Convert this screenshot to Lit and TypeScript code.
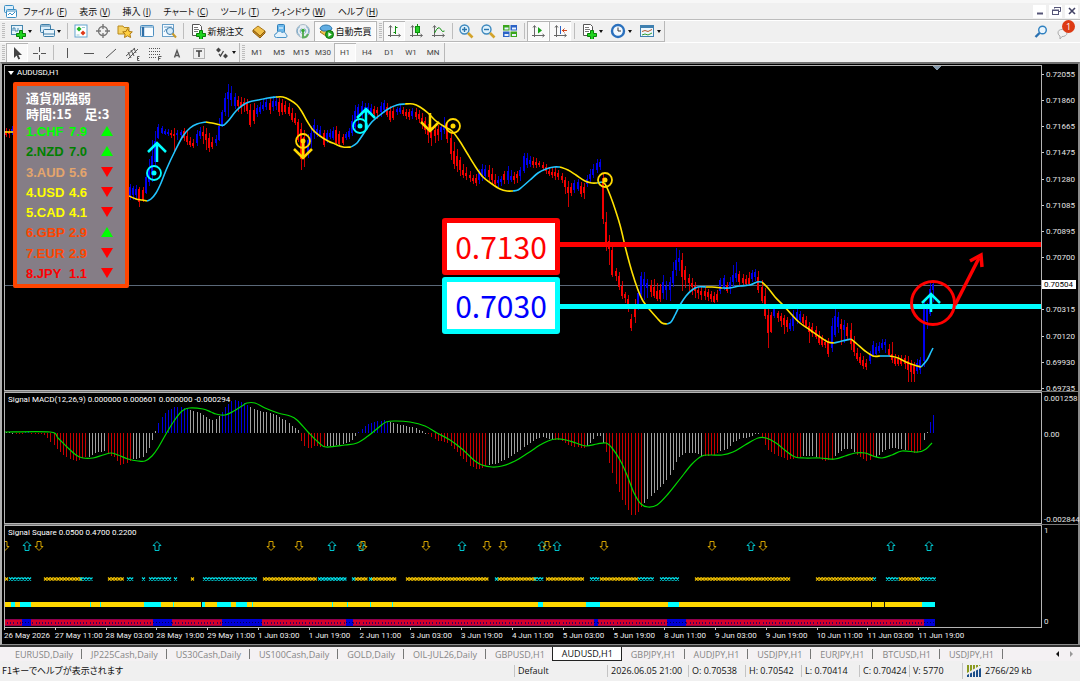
import { LitElement, html, svg, css, nothing } from "lit";
import { customElement } from "lit/decorators.js";
import { classMap } from "lit/directives/class-map.js";

const STEP = 3.175;
const FIRST = 6;

/* Price bars: x, high, body top, body bottom, low, colour */
const BARS = `6 128 131 135 137 r;9 129 132 134 138 r;12 126 129 133 135 b
130 184 187 197 200 b;133 186 188 195 200 b;137 185 189 195 199 b;139 187 188 202 207 r;142 190 193 201 203 r;145 175 178 196 197 b;148 166 172 183 186 b;151 143 160 178 186 b;155 132 143 165 170 b;157 124 127 142 144 b;160 125 127 133 134 b;165 129 131 134 135 b;171 130 133 135 138 r;174 128 134 136 153 r;177 130 133 135 140 b;180 130 132 134 138 b;184 128 131 138 141 r;187 130 136 142 145 r;190 137 141 145 147 r;193 140 144 146 148 r;196 130 134 144 147 b;200 127 131 135 138 b;205 126 133 137 149 r;209 133 138 148 152 r;213 138 143 147 149 r;217 134 137 141 144 b;219 116 124 140 141 b;222 110 112 125 126 b;225 93 98 112 116 b;228 84 92 99 119 b;230 82 91 97 105 b;234 92 97 106 108 b;238 96 100 106 112 r;243 98 103 107 115 r;246 97 100 105 108 r;250 104 110 125 127 r;253 103 110 122 125 r;257 105 108 114 117 b;262 100 106 110 112 b;266 98 102 107 110 b;270 98 103 110 115 r;275 95 100 104 108 b;278 97 102 112 116 r;284 100 104 112 114 r;288 102 106 113 115 r;292 108 113 120 122 r;297 117 121 125 127 r;300 122 125 165 169 r;303 125 135 150 172 r;306 135 140 158 162 r;309 133 140 150 155 b;313 117 124 132 140 b;316 124 128 135 138 b;320 126 130 134 136 b;324 131 133 147 148 r;328 130 133 137 140 b;332 127 132 136 138 b;336 126 130 143 145 r;342 134 137 144 146 r;346 132 134 138 140 b;350 126 130 136 138 b
354 105 113 130 135 b;357 105 108 122 130 b;361 101 106 112 118 b;365 103 107 113 116 b;370 103 107 111 114 b;374 106 109 114 118 r;378 107 110 113 119 r;382 100 104 112 116 b;385 100 103 109 111 b;389 105 111 120 122 r;392 107 112 121 122 r;396 107 109 112 115 b;400 105 108 112 114 b;404 108 111 115 117 r;408 109 112 117 120 r;412 108 111 116 119 b;417 108 112 117 120 r;421 112 117 122 127 r;425 117 121 130 134 r;430 127 132 138 148 r;436 125 130 136 141 r;441 124 127 132 140 b;445 115 124 130 133 b;449 125 130 145 150 r;452 139 145 163 170 r;455 145 155 165 169 r;459 154 157 168 175 r;463 164 170 175 178 r;467 168 173 176 180 r;473 175 178 181 184 r;477 174 178 184 187 r;481 164 169 177 182 b;486 165 169 176 178 b;490 165 171 178 183 r;495 174 180 184 186 r;500 177 180 183 187 b;503 174 177 180 184 r;507 165 170 180 184 b;511 170 176 180 182 b;515 173 176 180 184 r;520 169 172 176 182 b;523 153 156 172 174 b;526 152 158 165 168 b;531 157 160 164 167 b;534 157 161 165 168 r;540 161 163 165 167 r;545 163 166 170 173 r;550 168 172 175 177 r;555 167 172 176 180 r;560 171 174 177 180 r;564 176 178 185 188 r;567 181 187 193 211 r;571 183 187 193 196 r;574 180 183 190 193 b;577 178 181 188 190 b;581 182 186 194 198 r;584 183 187 193 199 r;588 172 176 181 183 b;592 166 172 178 181 b;596 159 163 170 173 b;600 159 162 167 170 b;602 160 162 210 215 r;605 203 215 241 246 r;609 235 240 247 264 r;612 240 247 275 276 r
615 268 271 274 280 r;618 270 273 284 287 r;621 278 284 295 298 r;625 292 294 298 303 r;628 293 297 307 310 r;631 317 321 330 332 r;634 300 308 318 325 r;637 294 300 312 314 b;640 274 275 298 300 b;643 269 278 285 300 b;648 281 284 288 298 b;652 279 285 294 297 r;656 280 290 298 300 r;659 290 295 302 304 r;662 272 280 294 298 b;666 281 286 290 300 b;669 280 284 291 303 b;672 266 274 286 290 b;675 248 260 272 278 b;679 250 258 262 270 b;682 252 259 277 291 r;686 268 272 280 288 r;690 277 281 285 292 r;694 280 285 290 298 r;698 287 290 293 299 r;704 287 291 296 300 r;709 290 293 298 302 r;714 292 296 302 303 r;718 290 294 300 302 r;721 275 276 289 292 b;724 275 278 288 290 b;728 285 288 292 295 r;731 273 279 288 294 b;735 258 272 276 280 b;739 270 274 282 286 r;744 276 279 284 286 r;748 273 280 285 287 r;752 270 273 279 282 b;755 269 272 276 280 b;758 270 276 288 292 r;761 278 285 298 300 r;765 288 297 317 320 r;768 305 315 333 348 r;771 312 315 333 334 r;774 305 308 316 318 b;778 312 314 318 322 r;780 312 316 320 325 r;784 315 318 325 334 r;788 317 321 328 331 r;791 320 324 330 331 b;794 308 311 325 331 b;798 310 313 318 320 b;802 313 316 322 325 r;806 316 320 326 328 r;809 322 326 332 343 r;814 324 328 333 335 r;818 330 334 342 344 r;822 335 338 345 347 r;825 339 342 345 348 r;828 340 344 354 357 r;831 320 328 350 354 b;834 308 316 338 340 b;837 309 314 326 328 b;840 318 323 328 346 r;844 320 325 330 343 b;848 323 327 337 340 r;851 323 330 345 352 r;855 342 347 356 358 r;858 352 356 360 362 r;862 354 358 365 368 r;866 360 364 368 371 r;869 354 358 363 366 b;872 340 344 355 357 b;877 344 348 354 355 b;882 339 343 348 350 b;885 338 341 344 352 b;889 345 350 356 358 r;892 342 354 360 363 r;895 354 358 364 366 r;899 355 359 364 366 r;904 355 358 363 366 r;907 355 360 370 382 r;911 360 364 372 382 r;914 362 366 374 382 r;918 358 362 370 372 b;921 357 360 370 375 b;923 301 303 370 375 b;926 308 314 322 332 b;930 280 289 314 316 b;933 283 284 290 302 b`;

/* Moving average, one colour per run */
const AVERAGE: [string, string][] = [
  ["y", "5 132,13 132"],
  ["y", "129 196,136 199,142 200,147 201"],
  ["c", "147 201,151 199,156 193,161 183,167 168,175 151,183 136,190 128,197 124,206 122"],
  ["y", "206 122,212 123,220 125"],
  ["c", "220 125,224 125,229 120,236 111,243 105,249 102,258 100,268 98,276 97"],
  ["y", "276 97,283 97,290 100,297 105,302 112,307 121,313 130,320 136,328 141,335 144,343 147,351 147"],
  ["c", "351 147,357 143,364 133,371 123,380 115,388 109,397 105,405 104"],
  ["y", "405 104,413 104,420 107,428 113,436 121,445 127,452 131,459 140,467 153,475 166,483 177,492 184,500 189,507 191,513 191"],
  ["c", "513 191,518 190,522 187,530 180,538 173,546 169,554 167,560 167"],
  ["y", "560 167,568 170,576 175,585 181,592 183,597 183"],
  ["c", "597 183,602 182"],
  ["y", "602 182,605 184,608 190,613 203,620 225,626 250,632 272,638 290,643 301,650 310,657 318,662 323,667 324"],
  ["c", "667 324,671 322,675 315,680 305,686 296,692 290,698 287,706 287"],
  ["y", "706 287,712 287,722 288"],
  ["c", "722 288,729 288,740 286,750 285,757 282,762 282"],
  ["y", "762 282,768 288,775 297,783 305,792 315,800 323,810 330,820 337,828 342,834 343"],
  ["c", "834 343,842 341,851 339"],
  ["y", "851 339,857 344,865 351,873 356,880 356"],
  ["c", "880 356,890 356"],
  ["y", "890 356,898 358,906 362,914 365,921 367"],
  ["c", "921 367,927 360,931 352,933 348"],
];

/* Histogram: x, end of bar, colour */
const MACD_BARS = `8 432 g;20 434 r;28 431 b;34 434 r;40 434 r;44 435 r;50 441 r;56 448 r;62 454 r;68 458 r;76 461 r;85 457 r;88 457 g;95 453 g;105 451 g;109 455 r;115 458 r;120 465 r;125 464 r;132 459 r;134 459 g;142 458 g;148 450 g;152 440 g;154 434 g;157 426 b;162 416 b;168 410 b;175 407 b;182 407 b;187 409 b;190 410 g;200 413 g;210 419 g;214 421 g;218 417 g;221 414 b;224 408 b;228 404 b;233 400 b;240 402 b;246 404 b;249 406 g;256 410 g;265 412 g;275 415 g;285 420 g;291 425 g;298 430 g;300 438 r;304 446 r;309 449 r;314 446 r;325 447 r;328 446 g;340 445 g;350 442 g;355 436 g;360 430 b;366 425 b;374 422 b;384 420 b;388 423 b;390 422 g;400 425 g;412 427 g;420 430 g;424 432 g;428 434 r;437 441 r;446 442 r;455 450 r;462 458 r;470 466 r;478 470 r;486 466 r;488 465 g;495 464 g;502 461 g;510 457 g;520 450 g;528 444 g;536 439 g;542 437 g;552 440 g;556 440 r;562 441 r;568 445 r;576 447 r;584 448 r;588 446 g;594 438 g;599 434 g;602 441 g;606 452 r;610 465 r;616 485 r;622 500 r;628 510 r;632 516 r;636 515 r;640 508 r;643 505 g;650 496 g;657 490 g;665 482 g;672 472 g;676 462 g;680 456 g;686 453 g;695 453 g;702 456 g;706 456 r;714 455 r;718 453 r;721 450 g;727 449 g;732 443 g;740 439 g;750 437 g;756 434 g;759 434 g;762 437 r;766 448 r;772 453 r;780 457 r;788 460 r;796 458 r;801 457 r;804 456 g;814 456 g;818 458 r;824 461 r;832 460 r;835 455 g;842 450 g;850 448 g;854 452 g;857 455 r;862 458 r;868 462 r;874 456 r;877 457 g;885 450 g;893 448 g;905 450 g;907 450 r;914 453 r;920 451 r;923 442 g;926 434 g;929 425 b;932 415 b`;

const MACD_LINE =
  "5 432,50 432,58 438,67 447,76 455,83 458,93 458,103 455,111 453,118 455,128 459,138 461,145 461,152 456,158 448,166 434,174 421,182 411,189 408,203 409,211 412,216 414,225 415,234 411,242 406,247 403,255 403,265 408,278 413,290 416,297 420,308 432,318 442,326 447,345 445,357 443,368 436,378 428,386 422,396 421,410 422,425 426,437 433,450 440,462 449,475 461,482 465,492 467,502 466,515 461,528 453,540 445,548 441,556 439,566 440,576 443,586 446,597 444,606 443,612 448,620 460,627 475,634 493,641 504,648 507,657 505,668 494,680 479,692 464,702 456,710 455,722 455,733 452,745 445,758 438,766 438,776 443,786 451,795 457,805 458,820 458,835 459,845 456,855 453,865 453,873 456,882 458,892 455,902 451,918 452,926 449,932 443";

const UP_MARKS = [27, 157, 332, 361, 462, 542, 557, 751, 891, 929];
const DOWN_MARKS = [5, 39, 271, 299, 363, 426, 487, 503, 547, 604, 712, 763];
const GOLD_RUNS = [[5, 9], [44, 80], [108, 124], [191, 194], [263, 317], [355, 368], [371, 396], [406, 489], [498, 534], [546, 584], [600, 638], [695, 791], [816, 873], [899, 920]];
const CYAN_RUNS = [[9, 31], [80, 92], [127, 133], [142, 146], [149, 171], [174, 177], [203, 257], [318, 346], [352, 355], [369, 371], [495, 498], [534, 543], [590, 600], [638, 654], [660, 680], [873, 877], [886, 898], [920, 934]];
const BAND_CYAN = [[11, 15], [20, 31], [90, 91], [100, 101], [144, 161], [173, 174], [202, 205], [217, 231], [236, 247], [252, 253], [332, 333], [347, 348], [370, 371], [392, 393], [538, 543], [586, 600], [668, 679], [922, 935]];
const BAND_GAPS = [201, 871, 884];
const BLUE_RUNS = [[22, 31], [153, 172], [222, 262], [346, 353], [594, 598], [667, 686], [924, 935]];

const TIMES = ["26 May 2026", "27 May 11:00", "28 May 03:00", "28 May 19:00", "29 May 11:00", "1 Jun 03:00", "1 Jun 19:00", "2 Jun 11:00", "3 Jun 03:00", "3 Jun 19:00", "4 Jun 11:00", "5 Jun 03:00", "5 Jun 19:00", "8 Jun 11:00", "9 Jun 03:00", "9 Jun 19:00", "10 Jun 11:00", "11 Jun 03:00", "11 Jun 19:00"];
const PRICES = ["0.72055", "0.71860", "0.71665", "0.71475", "0.71280", "0.71085", "0.70895", "0.70700", "", "0.70315", "0.70120", "0.69930", "0.69735"];

const curve = (points: string) => {
  const p = points.split(",").map((s) => s.split(" ").map(Number));
  let d = `M${p[0][0]} ${p[0][1]}`;
  for (let i = 0; i < p.length - 1; i++) {
    const a = p[i - 1] ?? p[i];
    const b = p[i];
    const c = p[i + 1];
    const e = p[i + 2] ?? c;
    d += `C${b[0] + (c[0] - a[0]) / 6} ${b[1] + (c[1] - a[1]) / 6} ${c[0] - (e[0] - b[0]) / 6} ${c[1] - (e[1] - b[1]) / 6} ${c[0]} ${c[1]}`;
  }
  return d;
};

const parse = (text: string) =>
  text.split(/[;\n]/).map((row) => {
    const f = row.trim().split(" ");
    return { v: f.slice(0, -1).map(Number), c: f[f.length - 1] };
  });

/* Fill every bar slot from the nearest entries on each side */
const fill = (text: string) => {
  const rows = parse(text);
  const out: { v: number[]; c: string }[] = [];
  for (let i = 0; FIRST + i * STEP < 935; i++) {
    const x = FIRST + i * STEP;
    let k = 0;
    while (k < rows.length - 2 && rows[k + 1].v[0] <= x) k++;
    const a = rows[k];
    const b = rows[k + 1];
    const t = Math.min(1, Math.max(0, (x - a.v[0]) / (b.v[0] - a.v[0])));
    if (b.v[0] - a.v[0] > 60 && t > 0.02 && t < 0.98) continue;
    const near = t < 0.5 ? a : b;
    out.push({ v: [Math.round(x), ...a.v.slice(1).map((n, j) => Math.round(n + (b.v[j + 1] - n) * t))], c: near.c });
  }
  return out;
};

@customElement("tool-icon")
class ToolIcon extends LitElement {
  static properties = { name: {} };
  declare name: string;

  static styles = css`
    :host { display: inline-flex; flex: none; }
    svg { display: block; width: 16px; height: 16px; }
  `;

  glyph() {
    const axes = svg`<path d="M4.5 3v11M2 12.500h12M3 4.500l1.500-2 1.500 2M12.500 11l2 1.500-2 1.500" fill="none" stroke="#666"/>`;
    const plus = svg`<path d="M9.500 7.500h3v3h3v3h-3v3h-3v-3h-3v-3h3z" fill="#1fd31f" stroke="#078007"/>`;
    const page = svg`<path d="M2.500 1.500h7l2 2v9h-9z" fill="#fff" stroke="#555"/><path d="M4 4.500h4M4 6.500h5M4 8.500h4" stroke="#777"/>`;
    switch (this.name) {
      case "app": return svg`<rect x="2.500" y="2.500" width="9" height="7" rx="1" fill="#dff0fb" stroke="#3b8fc4"/><rect x="4.500" y="6.500" width="10" height="8" rx="1" fill="#fff" stroke="#3b8fc4"/><path d="M5 8h9M6 12l2-2 2 2 3-3" fill="none" stroke="#3b8fc4"/>`;
      case "newchart": return svg`<rect x="1.500" y="2.500" width="11" height="9" fill="#e6f3fb" stroke="#4686ad"/><path d="M3 8V5h2v3h3V5" fill="none" stroke="#4686ad"/>${plus}`;
      case "profiles": return svg`<rect x="1.500" y="1.500" width="10" height="8" rx="1" fill="#dceefa" stroke="#3f7ea8"/><rect x="4.500" y="6.500" width="11" height="7" rx="1" fill="#eaf5fc" stroke="#3f7ea8"/><path d="M2 3h9M5 11h10" stroke="#3f7ea8"/>`;
      case "market": return svg`<rect x="2" y="2" width="12" height="12" fill="#fff" stroke="#63a4cf"/><path d="M6 3.500l2.500 2.500L6 8.500 3.500 6z" fill="#1db41d"/><path d="M10 7.500l2.500 2.500-2.500 2.500L7.500 10z" fill="#e03818"/><path d="M9 4.500h3M3.500 12h3" stroke="#9cc"/>`;
      case "target": return svg`<circle cx="8" cy="8" r="4.500" fill="none" stroke="#777" stroke-width="1.400"/><path d="M8 1v5M8 10v5M1 8h5M10 8h5" stroke="#777" stroke-width="1.400"/>`;
      case "navigator": return svg`<path d="M1 3h5l1 1.500h5V11H1z" fill="#f6d365" stroke="#b98a1c"/><path d="M10.500 5.500l1.500 3 3.300.4-2.400 2.200.7 3.400-3.100-1.700-3 1.700.6-3.400-2.400-2.200 3.300-.4z" fill="#ffcf40" stroke="#b07a10"/>`;
      case "terminal": return svg`<rect x="1.500" y="2.500" width="13" height="11" rx="1" fill="#f8fcff" stroke="#4d8fc0"/><path d="M2 4h12" stroke="#4d8fc0"/><path d="M4 4v9" stroke="#2e6ea6" stroke-width="2.400"/>`;
      case "tester": return svg`<rect x="1.500" y="1.500" width="11" height="12" fill="#f4faff" stroke="#6aa0c8"/><path d="M3 4h8M3 9l2-3 2 3" fill="none" stroke="#6aa0c8"/><circle cx="9" cy="8" r="3.500" fill="#d5ecfb" stroke="#3a78a8"/><path d="M11.500 10.500l3.500 4" stroke="#c79a2c" stroke-width="2"/>`;
      case "order": return svg`${page}${plus}`;
      case "book": return svg`<path d="M2 7l5-4 7 5-5 5z" fill="#f1c14b" stroke="#a8761a"/><path d="M2 7v2l7 6 5-5V8l-5 5z" fill="#c98b22" stroke="#8f6010"/>`;
      case "cloud": return svg`<rect x="4.500" y="1.500" width="7" height="8" rx="1" fill="#6db9ec" stroke="#2f7fb8"/><path d="M6 5h4" stroke="#fff"/><path d="M3.500 14.500a2 2 0 0 1 0-4 3 3 0 0 1 5.500-1 2.600 2.600 0 0 1 4 2 1.600 1.600 0 0 1 0 3z" fill="#e4f2fb" stroke="#4a94c9"/>`;
      case "signal": return svg`<circle cx="8" cy="8" r="6.500" fill="#e8eef2" stroke="#a9bac6"/><path d="M5 3.500a5 5 0 0 0 0 9M11 3.500a5 5 0 0 1 0 9M6.500 5.500a3 3 0 0 0 0 5M9.500 5.500a3 3 0 0 1 0 5" fill="none" stroke="#7aa9c9"/><path d="M8 8v6.500q4 0 5-3.500" fill="none" stroke="#5cae5c" stroke-width="2"/><circle cx="8" cy="7.500" r="1.800" fill="#37a637"/>`;
      case "auto": return svg`<path d="M2 9l6-6 6 6-6 4z" fill="#f0c24c" stroke="#a9791b"/><path d="M2 6a6 4 0 0 1 12 0l-3 2H5z" fill="#62aee3" stroke="#2b76ab"/><circle cx="11.500" cy="11.500" r="4" fill="#23a923" stroke="#0d6e0d"/><path d="M10.300 9.300l3.500 2.200-3.500 2.200z" fill="#fff"/>`;
      case "bars": return svg`${axes}<path d="M9.500 3v8M7.500 9.500h2M9.500 4.500h2" stroke="#0c8f0c" fill="none"/>`;
      case "candles": return svg`${axes}<path d="M9.500 1v11" stroke="#0c8f0c"/><rect x="7.500" y="3.500" width="4" height="6" fill="#27cf27" stroke="#0c8f0c"/>`;
      case "linechart": return svg`${axes}<path d="M4.500 10q4-8 6-4t4 2" fill="none" stroke="#0c8f0c"/>`;
      case "zoomin": return svg`<circle cx="6.500" cy="6.500" r="4.500" fill="#dff2fd" stroke="#3d88bd" stroke-width="1.400"/><path d="M4 6.500h5M6.500 4v5" stroke="#2b76ab" stroke-width="1.400"/><path d="M10 10l4.500 4.500" stroke="#d3a32b" stroke-width="2.600"/>`;
      case "zoomout": return svg`<circle cx="6.500" cy="6.500" r="4.500" fill="#dff2fd" stroke="#3d88bd" stroke-width="1.400"/><path d="M4 6.500h5" stroke="#2b76ab" stroke-width="1.400"/><path d="M10 10l4.500 4.500" stroke="#d3a32b" stroke-width="2.600"/>`;
      case "tile": return svg`<rect x="1" y="2" width="6.500" height="5.500" fill="#3aa61c"/><rect x="8.500" y="2" width="6.500" height="5.500" fill="#2b63c6"/><rect x="1" y="8.500" width="6.500" height="5.500" fill="#2b63c6"/><rect x="8.500" y="8.500" width="6.500" height="5.500" fill="#3aa61c"/><path d="M2.500 4.500h4v2h-4zM10 4.500h4v2h-4zM2.500 11h4v2h-4zM10 11h4v2h-4z" fill="#e8f2ff"/>`;
      case "scroll": return svg`${axes}<path d="M8 4l4 3.500-4 3z" fill="#17a317"/>`;
      case "shift": return svg`${axes}<path d="M8.500 3v8" stroke="#2b63c6"/><path d="M10 7.500h5M12.500 5.500l-2 2 2 2" stroke="#d2451c" fill="none"/>`;
      case "indicators": return svg`${page}${plus}`;
      case "clock": return svg`<circle cx="8" cy="8" r="6" fill="#f3f9ff" stroke="#2a70bd" stroke-width="2.400"/><path d="M8 4.500V8h3" fill="none" stroke="#333"/>`;
      case "template": return svg`<rect x="1.500" y="2.500" width="13" height="11" fill="#eef7fd" stroke="#3f80b0"/><path d="M2 4h12" stroke="#3f80b0" stroke-width="2"/><path d="M3 8.500l3-1 3 1 4-2" fill="none" stroke="#b5562a"/><path d="M3 12l3-1 3 1 4-2" fill="none" stroke="#2f9a2f"/>`;
      case "cursor": return svg`<path d="M5 2v11l2.600-2.400 1.800 4 1.800-.8-1.800-3.900H13z" fill="#444"/>`;
      case "cross": return svg`<path d="M8.500 2v5M8.500 10v5M2 8.500h5M10 8.500h5" stroke="#555"/>`;
      case "vline": return svg`<path d="M8.500 3v10" stroke="#555"/>`;
      case "hline": return svg`<path d="M3 8.500h10" stroke="#555"/>`;
      case "trend": return svg`<path d="M3 13L13 4" stroke="#555"/>`;
      case "channel": return svg`<path d="M1 11L10 3M3 14L13 4M3 7l3 6M6 5l3 6M9 3l2 5" stroke="#555"/><path d="M14.500 11.500h-2v4h2M12.500 13.500h1.500" fill="none" stroke="#555"/>`;
      case "fibo": return svg`<path d="M2 3.500h11M2 6.500h11M2 9.500h11M2 12.500h7" stroke="#555" stroke-dasharray="1 1"/><path d="M14.500 11.500h-3v4M11.500 13.500h2" fill="none" stroke="#555"/>`;
      case "text": return svg`<path d="M5.500 12.500L8 5.500 10.500 12.500M6.500 10.500h3" fill="none" stroke="#555" stroke-width="1.400"/>`;
      case "label": return svg`<rect x="2.500" y="3.500" width="11" height="10" fill="none" stroke="#777" stroke-dasharray="1 1"/><path d="M5 6h6M8 6v6" stroke="#444" stroke-width="1.600"/>`;
      case "arrows": return svg`<path d="M2 5l2.500-2.500L7 5 4.500 7.500zM9 11l2.500-2.500L14 11l-2.500 2.500z" fill="#444"/><path d="M5 9l1.500 2 3-5" fill="none" stroke="#444" stroke-width="1.300"/>`;
      case "search": return svg`<circle cx="9.500" cy="6" r="3.800" fill="#eaf5fd" stroke="#2f80c0" stroke-width="1.400"/><path d="M6.500 9L2.500 13" stroke="#2a70b0" stroke-width="2.400"/>`;
      case "chat": return svg`<path d="M2 9a4.500 3.600 0 0 1 9 0 4.500 3.600 0 0 1-5 3.500L4 15v-3A3.600 3.600 0 0 1 2 9z" fill="#f2f2f2" stroke="#aaa"/>`;
      case "min": return svg`<path d="M5 10.500h6" stroke="#557" stroke-width="2"/>`;
      case "restore": return svg`<path d="M6.500 5.500v-1h6v4h-2" fill="none" stroke="#557"/><rect x="4.500" y="7" width="6" height="4.500" fill="none" stroke="#557"/><path d="M6 4.500h7M4 7.500h7" stroke="#557"/>`;
      case "close": return svg`<path d="M5 5l6 6M11 5l-6 6" stroke="#446" stroke-width="1.600"/>`;
      case "net": return svg`<path d="M1 2h14L1 10z" fill="#8a9a1e"/><path d="M15 5v9H1v-2z" fill="#1c4f8a"/><path d="M3.500 1v13M6.500 1v13M9.500 1v13M12.500 1v13" stroke="#eee"/>`;
      default: return nothing;
    }
  }

  render() {
    return html`<svg viewBox="0 0 16 16" aria-hidden="true">${this.glyph()}</svg>`;
  }
}

@customElement("price-chart")
class PriceChart extends LitElement {
  static styles = css`
    :host { display: grid; grid-template-columns: 1fr 36px; position: relative; min-height: 0; }
    .plot { position: relative; border: 1px solid #b4b4b4; overflow: hidden; min-width: 0; }
    svg { position: absolute; inset: 0; width: 100%; height: 100%; shape-rendering: crispEdges; }
    .smooth { shape-rendering: auto; }
    .r { fill: #f40000; } .b { fill: #0000f0; }
    .avg { fill: none; stroke-width: 1.6; shape-rendering: auto; }
    .avg.y { stroke: #ffe100; } .avg.c { stroke: #22c4ff; }
    .symbol { position: absolute; left: 3px; top: 0; font-size: 8px; line-height: 13px; color: #fff; display: flex; align-items: center; gap: 3px; }
    .caret { border: 3px solid transparent; border-top: 4px solid #fff; border-bottom: 0; }
    .strength { position: absolute; left: 8px; top: 16px; width: 116px; height: 206px; box-sizing: border-box; border: 4px solid #ff4500; border-radius: 2px; background: #857d86; padding: 4px 12px 0 9px; display: flex; flex-direction: column; color: #fff; }
    .strength h2 { margin: 0; font: 700 13px/16px "Noto Sans CJK JP", sans-serif; white-space: pre; }
    table { flex: 1; border-collapse: collapse; width: 100%; font: bold 13px/20px "Liberation Sans", sans-serif; }
    td { padding: 0; } td:first-child { width: 43px; } td:last-child { text-align: right; }
    .tri { display: inline-block; border: 6px solid transparent; }
    .tri.up { border-bottom: 10px solid #00ff00; border-top: 0; }
    .tri.down { border-top: 10px solid #ff0000; border-bottom: 0; }
    .lime { color: #00ff00; } .green { color: #008000; } .sand { color: #e4a56c; } .yellow { color: #ffff00; } .orange { color: #ff4500; } .red { color: #ff0000; }
    .targets { position: absolute; left: 437px; top: 152px; display: grid; gap: 2px; }
    .target { border: 5px solid; border-radius: 3px; background: #fff; width: 108px; height: 47px; font: 30px/46px "Noto Sans CJK JP", sans-serif; text-align: center; }
    .target span { display: block; }
    .sell { border-color: #ff0000; } .sell span { color: #ff0000; }
    .buy { border-color: #00ffff; } .buy span { color: #0000ff; }
    .axis { display: flex; flex-direction: column; justify-content: space-between; padding: 5px 0 0; font-size: 8px; line-height: 9px; color: #e4e4e4; margin-bottom: -2px; }
    .axis span { display: flex; align-items: center; gap: 2px; height: 9px; white-space: nowrap; }
    .axis span::before { content: ""; width: 2px; height: 1px; background: #ccc; }
    .axis span:empty::before { background: none; }
    .now { position: absolute; right: 2px; top: 215px; background: #fff; color: #000; font-size: 8px; line-height: 9px; padding: 0 3px 0 2px; }
  `;

  up(x: number, y: number, len: number) {
    return svg`<path d="M${x} ${y + len}V${y}M${x - 9} ${y + 9}L${x} ${y}L${x + 9} ${y + 9}" fill="none" stroke="#00ffff" stroke-width="2.500"/>`;
  }

  down(x: number, y: number, len: number) {
    return svg`<path d="M${x} ${y - len}V${y}M${x - 9} ${y - 9}L${x} ${y}L${x + 9} ${y - 9}" fill="none" stroke="#ffd800" stroke-width="2.500"/>`;
  }

  ring(x: number, y: number, colour: string) {
    return svg`<circle cx=${x} cy=${y} r="7" fill="none" stroke=${colour} stroke-width="1.800"/><circle cx=${x} cy=${y} r="2.500" fill=${colour}/>`;
  }

  render() {
    const ranks: [string, string, string, boolean][] = [
      ["1.CHF", "7.9", "lime", true], ["2.NZD", "7.0", "green", true], ["3.AUD", "5.6", "sand", false], ["4.USD", "4.6", "yellow", false],
      ["5.CAD", "4.1", "yellow", false], ["6.GBP", "2.9", "orange", true], ["7.EUR", "2.9", "orange", false], ["8.JPY", "1.1", "red", false],
    ];
    return html`
      <div class="plot">
        <svg aria-hidden="true">
          <line x1="0" x2="100%" y1="219.500" y2="219.500" stroke="#5a6878" />
          <g transform="translate(-5 -66)">
            ${fill(BARS).map(({ v, c }) => svg`<rect class=${c} x=${v[0]} y=${v[1]} width="1" height=${v[4] - v[1]} opacity=".85"/><rect class=${c} x=${v[0] - 1} y=${v[2]} width="2" height=${Math.max(1, v[3] - v[2])}/>`)}
            ${AVERAGE.map(([c, pts]) => svg`<path class="avg ${c}" d=${curve(pts)}/>`)}
            <path d="M932 66h9l-4 5z" fill="#8296a8" />
          </g>
          <g class="smooth">
            <line x1="554" x2="100%" y1="178.500" y2="178.500" stroke="#ff0000" stroke-width="5" />
            <line x1="554" x2="100%" y1="240.500" y2="240.500" stroke="#00ffff" stroke-width="5" />
          </g>
          <g class="smooth" transform="translate(-5 -66)">
            ${this.up(157, 143, 19)} ${this.ring(154, 173, "#00ffff")}
            ${this.up(366, 109, 21)} ${this.ring(360, 126, "#00ffff")}
            ${this.ring(303, 141, "#ffd800")} ${this.down(303, 158, 16)}
            ${this.down(430, 131, 18)} ${this.ring(453, 126, "#ffd800")} ${this.ring(605, 180, "#ffd800")}
            ${this.up(931, 294, 18)}
            <circle cx="933" cy="303" r="21.500" fill="none" stroke="#ff0000" stroke-width="3" />
            <path d="M955 305L979 258" stroke="#ff0000" stroke-width="3.500" />
            <path d="M970 261L981 255L982 267" fill="none" stroke="#ff0000" stroke-width="3.500" />
          </g>
        </svg>
        <div class="symbol"><i class="caret"></i>AUDUSD,H1</div>
        <section class="strength">
          <h2>通貨別強弱</h2>
          <h2>時間:15　足:3</h2>
          <table>
            ${ranks.map(([n, v, c, rise]) => html`<tr class=${c}><td>${n}</td><td>${v}</td><td><i class="tri ${rise ? "up" : "down"}"></i></td></tr>`)}
          </table>
        </section>
        <div class="targets">
          <div class="target sell"><span>0.7130</span></div>
          <div class="target buy"><span>0.7030</span></div>
        </div>
      </div>
      <div class="axis">${PRICES.map((p) => html`<span>${p}</span>`)}</div>
      <div class="now">0.70504</div>
    `;
  }
}

@customElement("macd-chart")
class MacdChart extends LitElement {
  static styles = css`
    :host { display: grid; grid-template-columns: 1fr 36px; flex: none; }
    .plot { position: relative; border: 1px solid #b4b4b4; overflow: hidden; height: 130px; min-width: 0; }
    svg { position: absolute; inset: 0; width: 100%; height: 100%; shape-rendering: crispEdges; }
    .r { fill: #c80000; } .b { fill: #0000e0; } .g { fill: #a0a0a0; }
    .signal { fill: none; stroke: #00d800; stroke-width: 1.2; shape-rendering: auto; }
    .title { position: absolute; left: 3px; top: 0; font-size: 8px; line-height: 13px; color: #fff; }
    .axis { display: grid; grid-template-rows: 36px 1fr auto; font-size: 8px; line-height: 9px; color: #e4e4e4; padding: 2px 0 0 2px; white-space: nowrap; }
  `;

  render() {
    return html`
      <div class="plot">
        <svg aria-hidden="true">
          <g transform="translate(-5 -393)">
            ${fill(MACD_BARS).map(({ v, c }) => svg`<rect class=${c} x=${v[0]} y=${Math.min(v[1], 433)} width="1" height=${Math.max(1, Math.abs(v[1] - 433))}/>`)}
            <path class="signal" d=${curve(MACD_LINE)} />
          </g>
        </svg>
        <div class="title">Signal MACD(12,26,9) 0.000000 0.000601 0.000000 -0.000294</div>
      </div>
      <div class="axis"><span>0.001258</span><span>0.00</span><span>-0.002844</span></div>
    `;
  }
}

@customElement("square-chart")
class SquareChart extends LitElement {
  static styles = css`
    :host { display: grid; grid-template-columns: 1fr 36px; flex: none; }
    .plot { position: relative; border: 1px solid #b4b4b4; overflow: hidden; height: 101px; min-width: 0; }
    svg { position: absolute; inset: 0; width: 100%; height: 100%; shape-rendering: crispEdges; }
    .title { position: absolute; left: 3px; top: 0; font-size: 8px; line-height: 13px; color: #fff; }
    .axis { display: flex; flex-direction: column; justify-content: space-between; font-size: 8px; line-height: 10px; color: #e4e4e4; padding: 1px 0 1px 2px; }
    .times { display: grid; grid-template-columns: repeat(19, 1fr); width: 965px; height: 16px; font-size: 8px; line-height: 11px; color: #eee; white-space: nowrap; }
    .times span::before { content: ""; display: block; width: 1px; height: 2px; background: #ccc; }
  `;

  crosses(runs: number[][], colour: string) {
    let d = "";
    for (const [a, b] of runs) for (let x = a; x < b - 1; x += STEP) d += `M${x.toFixed(1)} 577.500l3 3m0-3l-3 3`;
    return svg`<path d=${d} fill="none" stroke=${colour} stroke-width="1.100" shape-rendering="auto"/>`;
  }

  render() {
    const dots: number[] = [];
    for (let x = 7; x < 934; x += STEP) dots.push(x);
    return html`
      <div class="plot">
        <svg aria-hidden="true">
          <g transform="translate(-5 -526)">
            ${UP_MARKS.map((x) => svg`<path d="M${x} 541.500l4 4h-2v5h-4v-5h-2z" fill="none" stroke="#00c4cc" shape-rendering="auto"/>`)}
            ${DOWN_MARKS.map((x) => svg`<path d="M${x} 550.500l4-4h-2v-5h-4v5h-2z" fill="none" stroke="#d0a000" shape-rendering="auto"/>`)}
            ${this.crosses(GOLD_RUNS, "#f0c000")} ${this.crosses(CYAN_RUNS, "#00dfe8")}
            <rect x="5" y="602" width="930" height="5" fill="#ffd700" />
            ${BAND_CYAN.map(([a, b]) => svg`<rect x=${a} y="602" width=${b - a} height="5" fill="#00ffff"/>`)}
            ${BAND_GAPS.map((x) => svg`<rect x=${x} y="602" width="1" height="5" fill="#101010"/>`)}
            <rect x="5" y="619" width="930" height="7" fill="#d4002a" />
            <path d="M5 619.500H935M5 625.500H935" stroke="#900050" />
            ${dots.map((x) => svg`<rect x=${Math.round(x)} y="622" width="1" height="2" fill="#3a0060"/>`)}
            ${BLUE_RUNS.map(([a, b]) => svg`<rect x=${a} y="619" width=${b - a} height="7" fill="#0000d8"/><path d="M${a} 622.500H${b}" stroke="#000050" stroke-dasharray="1 2"/>`)}
          </g>
        </svg>
        <div class="title">Signal Square 0.0500 0.4700 0.2200</div>
      </div>
      <div class="axis"><span>1</span><span>0</span></div>
      <div class="times">${TIMES.map((t) => html`<span>${t}</span>`)}</div>
    `;
  }
}

@customElement("app-root")
class AppRoot extends LitElement {
  static styles = css`
    :host { display: flex; flex-direction: column; height: 100vh; min-height: 560px; overflow: hidden; background: #f0f0f0; color: #111; font-family: "Open Sans", "Noto Sans CJK JP", sans-serif; font-size: 9px; box-sizing: border-box; }
    button { appearance: none; border: 0; margin: 0; padding: 0; background: none; font: inherit; color: inherit; display: inline-flex; align-items: center; justify-content: center; white-space: nowrap; }
    .jp { font-family: "Noto Sans CJK JP", sans-serif; font-feature-settings: "palt"; font-size: 9px; }
    .menu { display: flex; align-items: center; height: 16px; border-top: 3px solid #f7f7f7; border-bottom: 1px solid #bcbcbc; padding-left: 2px; flex: none; }
    .menu nav { display: flex; gap: 12px; margin-left: 5px; }
    .menu u { text-underline-offset: 1px; }
    .wins { margin-left: auto; display: flex; gap: 3px; padding-right: 2px; }
    .wins button { width: 13px; height: 13px; background: #fff; }
    .tools { display: flex; align-items: stretch; flex: none; border-top: 1px solid #fff; }
    .strip { display: flex; align-items: stretch; height: 20px; border-right: 1px solid #b8b8b8; border-bottom: 1px solid #b8b8b8; }
    .tools.second .strip { height: 19px; border-bottom: 0; }
    .grip { width: 3px; margin: 2px 1px 2px 2px; background: repeating-linear-gradient(#bdbdbd 0 1px, #f0f0f0 1px 2px); flex: none; }
    .sep { width: 1px; background: #bdbdbd; margin: 2px 2px 2px 3px; flex: none; }
    .tool { width: 22px; gap: 1px; }
    .tool.wide { width: 29px; gap: 2px; }
    .tool.order { width: 62px; }
    .tool.auto { width: 62px; }
    .tool.on { background: #f9f9f9; box-shadow: inset 1px 1px #b5b5b5, inset -1px -1px #fff; }
    .caret { border: 2px solid transparent; border-top: 3px solid #111; border-bottom: 0; }
    .frame-text { font-size: 8px; color: #444; font-family: Roboto, sans-serif; }
    .right { margin-left: auto; display: flex; align-items: center; gap: 7px; padding-right: 8px; }
    .bell { position: relative; }
    .count { position: absolute; left: 6px; top: -4px; width: 13px; height: 13px; border-radius: 50%; background: #dd3a14; color: #fff; font: 9px/13px "Open Sans", sans-serif; text-align: center; }
    .frame { flex: 1; min-height: 0; display: flex; flex-direction: column; background: #000; border: solid #8c8c8c; border-width: 2px 2px 1px; border-left-color: #b0b0b0; border-top-color: #707070; padding: 1px 0 0 2px; font-family: Roboto, sans-serif; }
    price-chart { flex: 1; }
    .split { height: 1px; background: #777; flex: none; }
    .tabs { display: flex; height: 14px; flex: none; background: #f4f1f3; border-top: 2px solid #333; color: #858585; padding-left: 6px; align-items: center; }
    .tab { padding: 0 8px 0 9px; height: 10px; border-right: 1px solid #777; }
    .tab.on { height: 14px; background: #fff; color: #111; border: 1px solid #222; border-top: 0; margin-left: -1px; }
    .tab.beforeon { border-right: 0; }
    .arrows { margin-left: auto; display: flex; gap: 11px; padding-right: 7px; }
    .arrow { border: 3px solid transparent; }
    .arrow.l { border-right: 3px solid #111; border-left: 0; }
    .arrow.r { border-left: 3px solid #999; border-right: 0; }
    .status { display: grid; grid-template-columns: 1fr 93px 81px 57px 56px 58px 50px 53px 118px; height: 20px; flex: none; align-items: center; background: #f0f0f0; }
    .status > span { padding-left: 3px; white-space: nowrap; line-height: 12px; border-left: 1px solid #c4c4c4; display: flex; align-items: center; gap: 3px; }
    .status > span:first-child { border-left: 0; padding-left: 2px; }
  `;

  tool(name: string, label: string, opts: { dd?: boolean; on?: boolean; text?: string; kind?: string } = {}) {
    return html`<button class=${classMap({ tool: true, wide: !!opts.dd, on: !!opts.on, jp: !!opts.text, [opts.kind ?? "plain"]: true })} aria-label=${label}>
      <tool-icon .name=${name}></tool-icon>${opts.text ?? nothing}${opts.dd ? html`<i class="caret"></i>` : nothing}
    </button>`;
  }

  render() {
    const menus = [["ファイル", "F"], ["表示", "V"], ["挿入", "I"], ["チャート", "C"], ["ツール", "T"], ["ウィンドウ", "W"], ["ヘルプ", "H"]];
    const tabs = ["EURUSD,Daily", "JP225Cash,Daily", "US30Cash,Daily", "US100Cash,Daily", "GOLD,Daily", "OIL-JUL26,Daily", "GBPUSD,H1", "AUDUSD,H1", "GBPJPY,H1", "AUDJPY,H1", "USDJPY,H1", "EURJPY,H1", "BTCUSD,H1", "USDJPY,H1"];
    const sep = html`<i class="sep"></i>`;
    const grip = html`<i class="grip"></i>`;
    return html`
      <header class="menu">
        <tool-icon .name=${"app"}></tool-icon>
        <nav class="jp">${menus.map(([t, k]) => html`<button>${t} (<u>${k}</u>)</button>`)}</nav>
        <div class="wins">
          <button aria-label="Minimize"><tool-icon .name=${"min"}></tool-icon></button>
          <button aria-label="Restore"><tool-icon .name=${"restore"}></tool-icon></button>
          <button aria-label="Close"><tool-icon .name=${"close"}></tool-icon></button>
        </div>
      </header>
      <div class="tools">
        <div class="strip">
          ${grip}${this.tool("newchart", "New chart", { dd: true })}${this.tool("profiles", "Profiles", { dd: true })}${sep}
          ${this.tool("market", "Market watch")}${this.tool("target", "Data window")}${this.tool("navigator", "Navigator")}${this.tool("terminal", "Terminal")}${this.tool("tester", "Strategy tester")}${sep}
          ${this.tool("order", "新規注文", { text: "新規注文", kind: "order" })}${this.tool("book", "MetaEditor")}${this.tool("cloud", "Cloud")}${this.tool("signal", "Signals")}${this.tool("auto", "自動売買", { text: "自動売買", on: true, kind: "auto" })}
        </div>
        <div class="strip">
          ${grip}${this.tool("bars", "Bar chart", { on: true })}${this.tool("candles", "Candlesticks")}${this.tool("linechart", "Line chart")}${sep}
          ${this.tool("zoomin", "Zoom in")}${this.tool("zoomout", "Zoom out")}${this.tool("tile", "Tile windows")}${sep}
          ${this.tool("scroll", "Auto scroll", { on: true })}${this.tool("shift", "Chart shift", { on: true })}${sep}
          ${this.tool("indicators", "Indicators", { dd: true })}${this.tool("clock", "Periods", { dd: true })}${this.tool("template", "Templates", { dd: true })}
        </div>
        <div class="right">
          <button aria-label="Search"><tool-icon .name=${"search"}></tool-icon></button>
          <button class="bell" aria-label="Messages"><tool-icon .name=${"chat"}></tool-icon><span class="count">1</span></button>
        </div>
      </div>
      <div class="tools second">
        <div class="strip">
          ${grip}${this.tool("cursor", "Cursor", { on: true })}${this.tool("cross", "Crosshair")}${sep}
          ${this.tool("vline", "Vertical line")}${this.tool("hline", "Horizontal line")}${this.tool("trend", "Trendline")}${this.tool("channel", "Channel")}${this.tool("fibo", "Fibonacci")}${this.tool("text", "Text")}${this.tool("label", "Text label")}${this.tool("arrows", "Arrows", { dd: true })}
        </div>
        <div class="strip">
          ${grip}${["M1", "M5", "M15", "M30", "H1", "H4", "D1", "W1", "MN"].map((p) => html`<button class=${classMap({ tool: true, "frame-text": true, on: p === "H1" })}>${p}</button>`)}
        </div>
      </div>
      <main class="frame">
        <price-chart></price-chart>
        <div class="split"></div>
        <macd-chart></macd-chart>
        <div class="split"></div>
        <square-chart></square-chart>
      </main>
      <nav class="tabs">
        ${tabs.map((t, i) => html`<button class=${classMap({ tab: true, on: i === 7, beforeon: i === 6 })}>${t}</button>`)}
        <div class="arrows"><i class="arrow l"></i><i class="arrow r"></i></div>
      </nav>
      <footer class="status">
        <span class="jp">F1キーでヘルプが表示されます</span><span>Default</span><span>2026.06.05 21:00</span><span>O: 0.70538</span><span>H: 0.70542</span><span>L: 0.70414</span><span>C: 0.70424</span><span>V: 5770</span><span><tool-icon .name=${"net"}></tool-icon>2766/29 kb</span>
      </footer>
    `;
  }
}
